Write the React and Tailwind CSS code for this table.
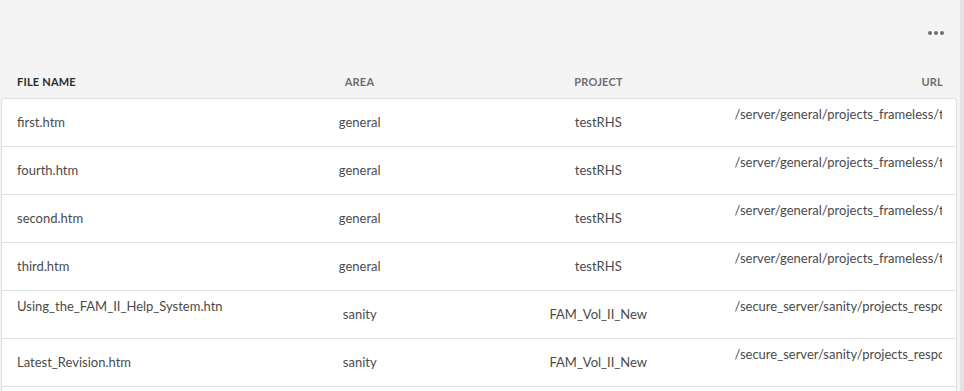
import React from "react";

const rows = [
  { name: "first.htm", area: "general", project: "testRHS", url: "/server/general/projects_frameless/testRHS/first.htm" },
  { name: "fourth.htm", area: "general", project: "testRHS", url: "/server/general/projects_frameless/testRHS/fourth.htm" },
  { name: "second.htm", area: "general", project: "testRHS", url: "/server/general/projects_frameless/testRHS/second.htm" },
  { name: "third.htm", area: "general", project: "testRHS", url: "/server/general/projects_frameless/testRHS/third.htm" },
  { name: "Using_the_FAM_II_Help_System.htn", area: "sanity", project: "FAM_Vol_II_New", url: "/secure_server/sanity/projects_responsive/FAM_Vol_II_New", top: true },
  { name: "Latest_Revision.htm", area: "sanity", project: "FAM_Vol_II_New", url: "/secure_server/sanity/projects_responsive/FAM_Vol_II_New" },
];

export default function App() {
  return (
    <div className="w-[964px] h-[391px] overflow-hidden bg-[#f4f4f4] flex font-['Lato',sans-serif]">
      <div className="flex-1 flex flex-col pl-px pr-[3px]">
        <div className="h-[64px] flex items-center justify-end pr-[13px] pt-[1px]">
          <div className="flex gap-[2px]">
            <span className="w-[4px] h-[4px] rounded-full bg-[#6e6e6e]" />
            <span className="w-[4px] h-[4px] rounded-full bg-[#6e6e6e]" />
            <span className="w-[4px] h-[4px] rounded-full bg-[#6e6e6e]" />
          </div>
        </div>
        <div className="h-[34px] grid grid-cols-4 items-center text-[11px] font-bold tracking-[0.2px] uppercase text-[#6e6e6e] pt-[3px]">
          <div className="pl-[16px] text-[#2c2c2c]">File Name</div>
          <div className="text-center">Area</div>
          <div className="text-center">Project</div>
          <div className="text-right pr-[14px]">URL</div>
        </div>
        <div className="bg-white border border-[#e1e1e1] rounded-t-[4px] border-b-0 flex-1">
          {rows.map((r, i) => (
            <div
              key={i}
              className="h-[48px] grid grid-cols-4 border-b border-[#e1e1e1] text-[13px] text-[#4b4b4b]"
            >
              <div className={`pl-[15px] overflow-hidden whitespace-nowrap ${r.top ? "pt-[6px]" : "flex items-center"}`}>
                {r.name}
              </div>
              <div className="flex items-center justify-center">{r.area}</div>
              <div className="flex items-center justify-center">{r.project}</div>
              <div className="pl-[17px] pr-[14px] pt-[6px]">
                <div className="overflow-hidden whitespace-nowrap">{r.url}</div>
              </div>
            </div>
          ))}
        </div>
      </div>
      <div className="w-[4px] bg-[#e3e3e3]" />
    </div>
  );
}
